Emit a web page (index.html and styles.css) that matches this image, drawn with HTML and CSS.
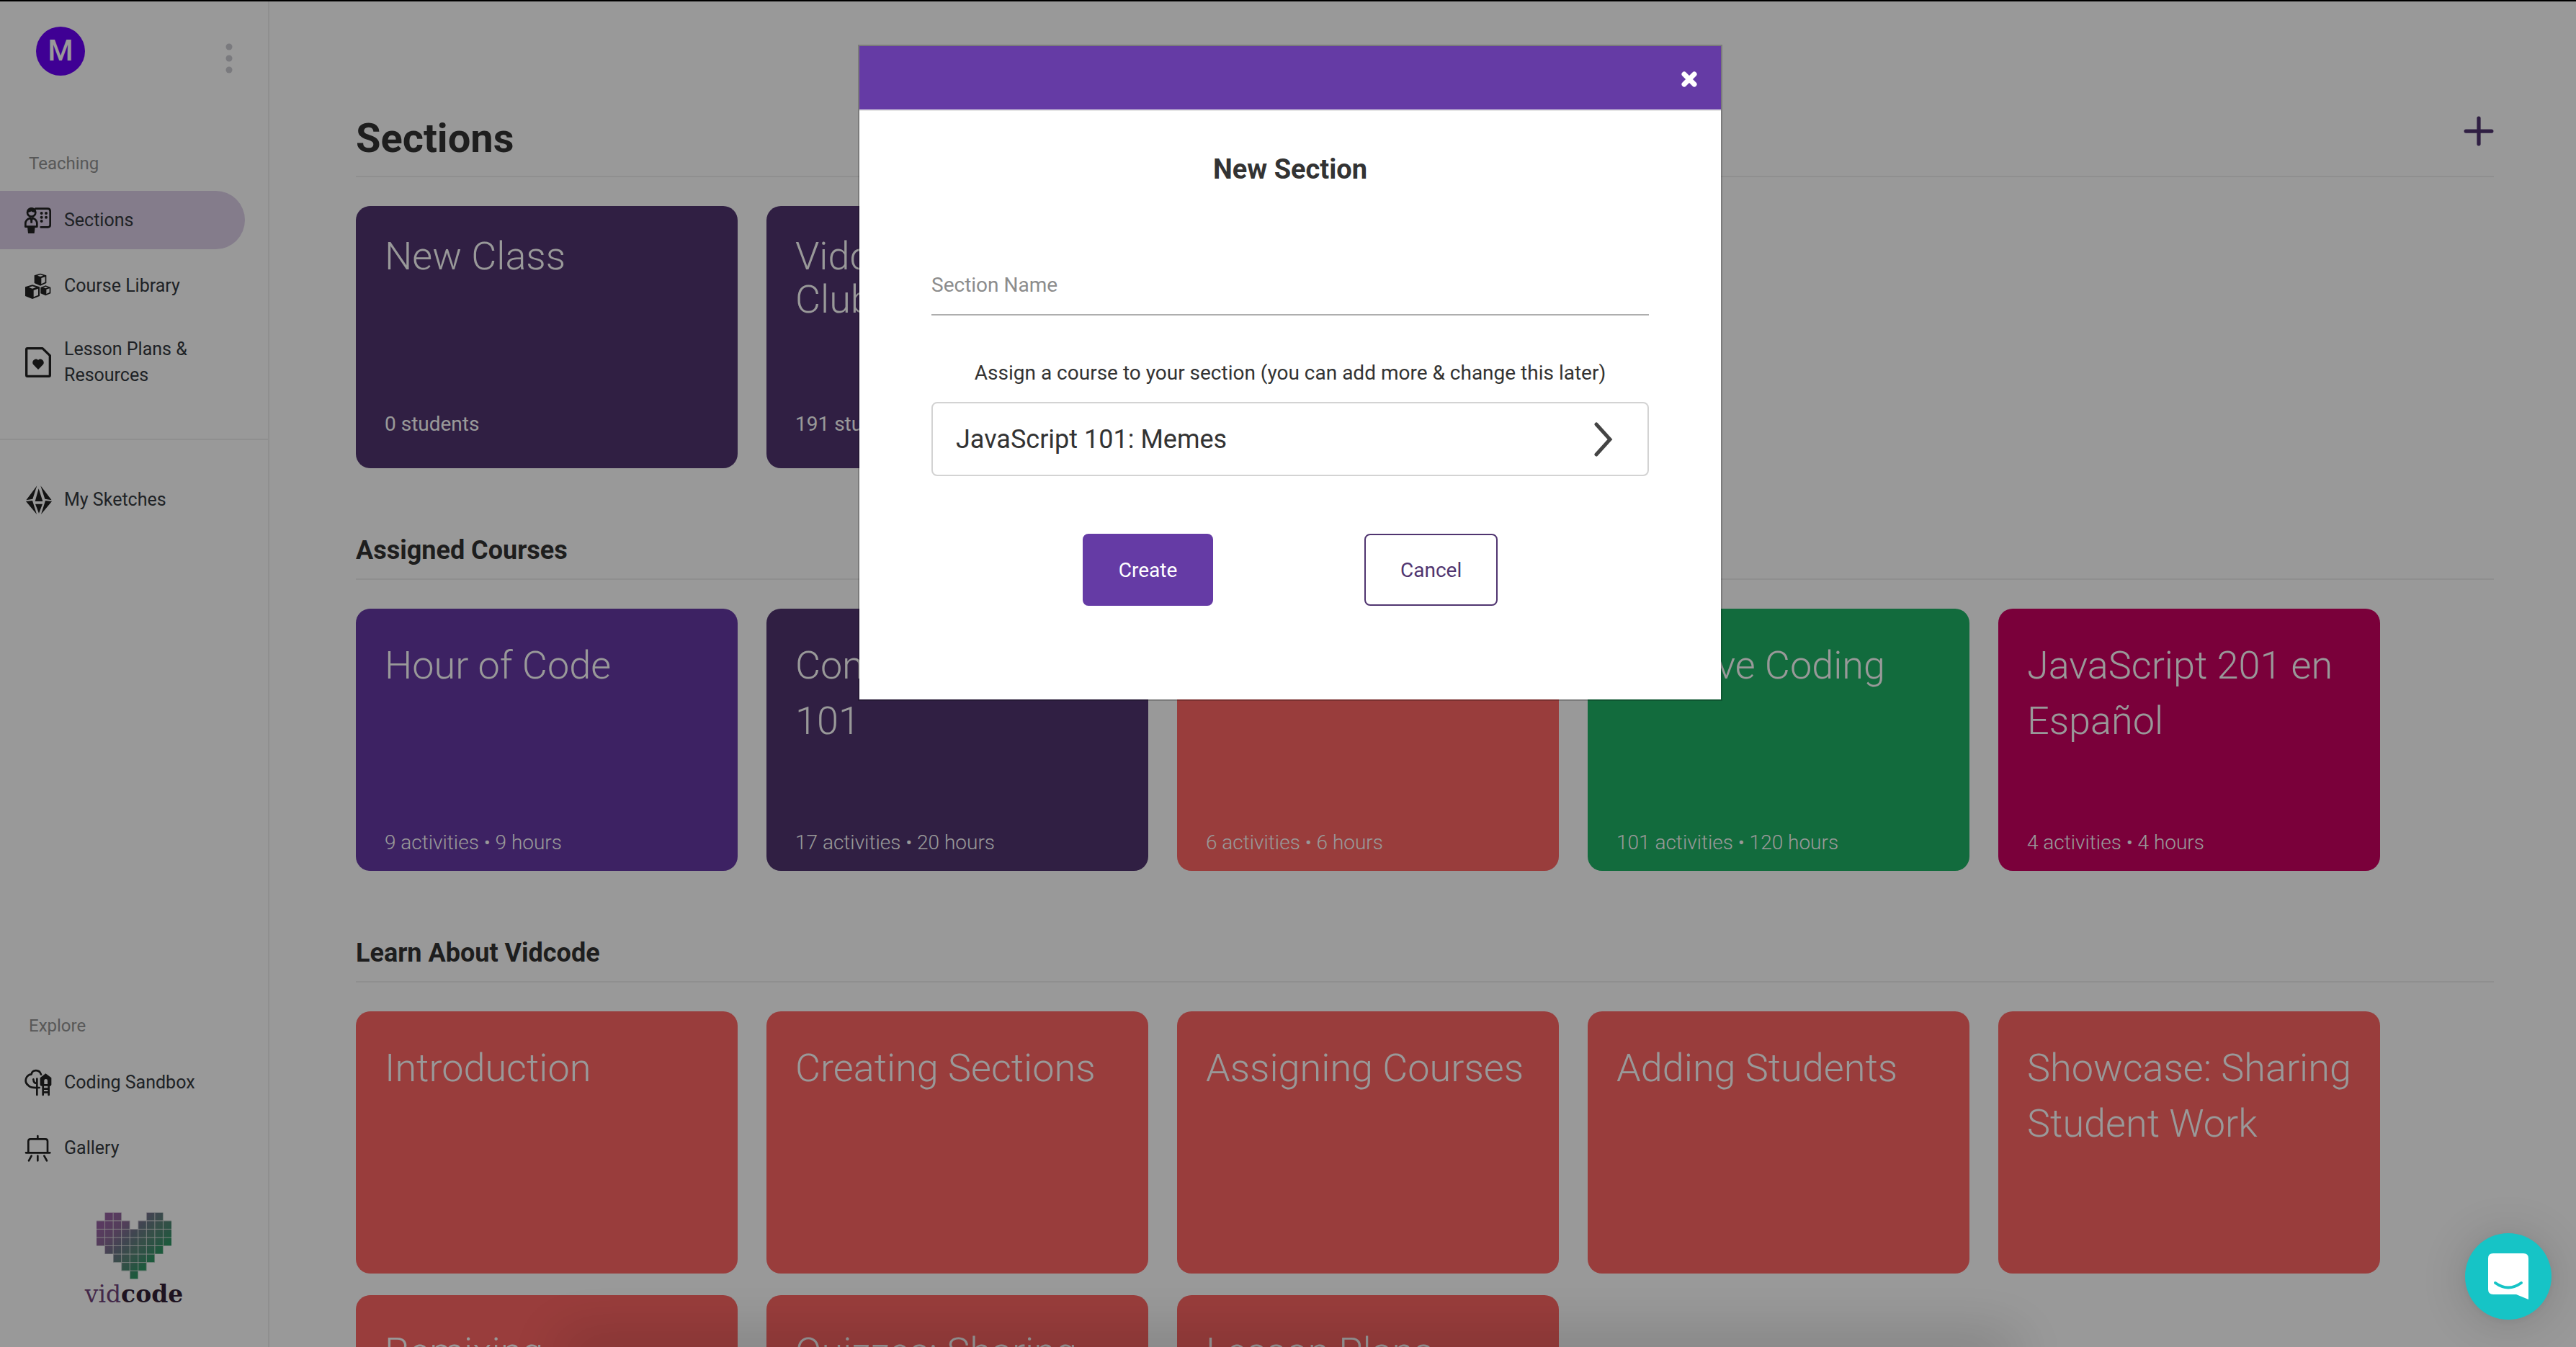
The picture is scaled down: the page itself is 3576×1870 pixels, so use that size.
FILE: index.html
```
<!DOCTYPE html>
<html lang="en">
<head>
<meta charset="utf-8">
<title>Vidcode</title>
<link rel="stylesheet" href="styles.css">
</head>
<body>
<div class="app">
  <aside class="sidebar">
    <div class="account">
      <span class="avatar">M</span>
      <button class="icon-button" type="button" aria-label="Account menu">
        <svg class="dots" viewBox="0 0 10 42"><circle cx="5" cy="5" r="4.5"/><circle cx="5" cy="21" r="4.5"/><circle cx="5" cy="37" r="4.5"/></svg>
      </button>
    </div>
    <nav class="nav">
      <p class="nav-label">Teaching</p>
      <a class="nav-item active" href="#">
        <svg class="nav-icon" viewBox="0 0 120 132">
          <path d="M49 17h50q11 0 11 11v57q0 9-9 9H71" class="line"/>
          <circle cx="32" cy="33" r="17" class="line"/>
          <path d="M13 33c0-27 38-27 38 0-10 0-16-1-20-5-4 4-9 5-18 5z"/>
          <path d="M7 92V79q0-16 19-23l6 6 6-6q17 7 17 23v13z" class="line"/>
          <path d="M27 56h10l-1 21h-8zM15 92h32l-3 28H18z"/>
          <circle cx="74" cy="36" r="6"/><circle cx="93" cy="36" r="6"/><circle cx="74" cy="53" r="6"/><circle cx="93" cy="53" r="6"/><circle cx="74" cy="69" r="6"/>
        </svg>
        <span>Sections</span>
      </a>
      <a class="nav-item" href="#">
        <svg class="nav-icon" viewBox="0 0 120 132">
          <path d="M69 14l25 8v32l-25 11-25-11V22z"/>
          <path d="M73 33l16-5v22l-16 8z" class="face"/><path d="M69 19l12 4-12 4-12-4z" class="face"/>
          <path d="M36 61l30 9v38l-30 12-30-12V70z"/>
          <path d="M41 84l19-7v27l-19 8z" class="face"/><path d="M36 67l15 5-15 5-15-5z" class="face"/>
          <path d="M91 64l21 8v25l-21 9-21-9V72z"/>
          <path d="M94 80l13-4v17l-13 6z" class="face"/><path d="M91 69l10 3-10 4-10-4z" class="face"/>
        </svg>
        <span>Course Library</span>
      </a>
      <a class="nav-item" href="#">
        <svg class="nav-icon" viewBox="0 0 120 132">
          <path d="M15 8h63l31 30v82q0 4-4 4H15q-4 0-4-4V12q0-4 4-4z" class="line thick"/>
          <path d="M60 96L40 76c-11-13 8-32 20-19 12-13 31 6 20 19z"/>
        </svg>
        <span>Lesson Plans &amp; Resources</span>
      </a>
      <hr class="nav-rule">
      <a class="nav-item" href="#">
        <svg class="nav-icon" viewBox="0 0 120 132">
          <path d="M55 7L37 62 10 67zM70 7l18 55 28 5zM62 19l17 53H47zM9 72l27-3 18 57zM117 72l-27-3-18 57zM48 83h30l-15 39z"/>
        </svg>
        <span>My Sketches</span>
      </a>
      <div class="nav-bottom">
        <p class="nav-label">Explore</p>
        <a class="nav-item" href="#">
          <svg class="nav-icon" viewBox="0 0 120 132">
            <path d="M72 32C65 9 35 11 32 31 8 34 8 57 8 59c0 12 9 16 15 22 8 8 24 6 42 6M55 117V50M40 52q1 17 15 17M55 66V50" class="line"/>
            <path d="M91 28l24 18v28q0 6-6 6H74q-6 0-6-6V46z"/>
            <path d="M85 72V58q0-7 7-7t7 7v14z" class="face"/>
            <path d="M80 78v39M104 78v39M80 92h24M80 106h24" class="line"/>
          </svg>
          <span>Coding Sandbox</span>
        </a>
        <a class="nav-item" href="#">
          <svg class="nav-icon" viewBox="0 0 120 132">
            <path d="M58 15v10M19 84V37q0-9 9-9h62q9 0 9 9v47M9 85h100M32 98l-11 20M58 98v20M85 98l11 20" class="line"/>
          </svg>
          <span>Gallery</span>
        </a>
      </div>
    </nav>
    <a class="brand" href="#">
      <svg class="heart" viewBox="0 0 9 8">
        <defs>
          <linearGradient id="heart-fill" gradientUnits="userSpaceOnUse" x1="0.5" y1="0.5" x2="6.5" y2="6.5">
            <stop offset="0.1" stop-color="#9562a0"/><stop offset="0.3" stop-color="#8a6896"/><stop offset="0.5" stop-color="#6b7586"/><stop offset="0.68" stop-color="#5a8478"/><stop offset="0.82" stop-color="#468a70"/><stop offset="0.95" stop-color="#2f9664"/>
          </linearGradient>
          <clipPath id="heart-shape"><path d="M1 0h2v1h1v1h1V1h1V0h2v1h1v3H8v1H7v1H6v1H5v1H4V7H3V6H2V5H1V4H0V1h1z"/></clipPath>
        </defs>
        <g clip-path="url(#heart-shape)">
          <path fill="url(#heart-fill)" d="M0 0h9v8H0z"/>
          <path class="grid-lines" d="M1 0v8M2 0v8M3 0v8M4 0v8M5 0v8M6 0v8M7 0v8M8 0v8M0 1h9M0 2h9M0 3h9M0 4h9M0 5h9M0 6h9M0 7h9"/>
        </g>
      </svg>
      <span class="wordmark">vid<b>code</b></span>
    </a>
  </aside>

  <main class="content">
    <section>
      <header class="page-head">
        <h1>Sections</h1>
        <button class="icon-button" type="button" aria-label="Add section">
          <svg class="plus" viewBox="0 0 40 40"><path d="M20 3v34M3 20h34"/></svg>
        </button>
      </header>
      <div class="cards sections">
        <a class="card plum" href="#"><h3>New Class</h3><p>0 students</p></a>
        <a class="card plum" href="#"><h3>Vidcode Club</h3><p>191 students</p></a>
      </div>
    </section>
    <section>
      <h2>Assigned Courses</h2>
      <div class="cards">
        <a class="card violet" href="#"><h3>Hour of Code</h3><p>9 activities • 9 hours</p></a>
        <a class="card plum" href="#"><h3>Computer Science 101</h3><p>17 activities • 20 hours</p></a>
        <a class="card coral" href="#"><h3>JavaScript 101</h3><p>6 activities • 6 hours</p></a>
        <a class="card green" href="#"><h3>Creative Coding</h3><p>101 activities • 120 hours</p></a>
        <a class="card berry" href="#"><h3>JavaScript 201 en Español</h3><p>4 activities • 4 hours</p></a>
      </div>
    </section>
    <section>
      <h2>Learn About Vidcode</h2>
      <div class="cards">
        <a class="card coral" href="#"><h3>Introduction</h3></a>
        <a class="card coral" href="#"><h3>Creating Sections</h3></a>
        <a class="card coral" href="#"><h3>Assigning Courses</h3></a>
        <a class="card coral" href="#"><h3>Adding Students</h3></a>
        <a class="card coral" href="#"><h3>Showcase: Sharing Student Work</h3></a>
        <a class="card coral" href="#"><h3>Remixing</h3></a>
        <a class="card coral" href="#"><h3>Quizzes: Sharing</h3></a>
        <a class="card coral" href="#"><h3>Lesson Plans</h3></a>
      </div>
    </section>
  </main>
</div>

<div class="overlay">
  <form class="modal" role="dialog" aria-labelledby="modal-title">
    <div class="modal-head">
      <button class="icon-button" type="button" aria-label="Close">
        <svg class="close" viewBox="0 0 22 22"><path d="M4 4l14 14M18 4L4 18"/></svg>
      </button>
    </div>
    <div class="modal-body">
      <h2 class="modal-title" id="modal-title">New Section</h2>
      <input class="name-field" type="text" placeholder="Section Name" aria-label="Section Name">
      <label class="course-label" for="course">Assign a course to your section (you can add more &amp; change this later)</label>
      <div class="course-picker">
        <select id="course"><option>JavaScript 101: Memes</option><option>Hour of Code</option></select>
        <svg class="chevron" viewBox="0 0 26 48"><path d="M3 3l19 21L3 45"/></svg>
      </div>
      <div class="actions">
        <button class="button primary" type="submit">Create</button>
        <button class="button" type="button">Cancel</button>
      </div>
    </div>
  </form>
</div>

<button class="chat" type="button" aria-label="Open chat">
  <svg viewBox="0 0 56 64"><path fill="#fff" d="M7 0h42q7 0 7 7v57l-17-7H7q-7 0-7-7V7q0-7 7-7z"/><path class="smile" d="M10 41q18 13 36 0"/></svg>
</button>
</body>
</html>
```
FILE: styles.css
```
* { box-sizing: border-box; }

body {
  margin: 0;
  background: #fff;
  color: #333;
  font-family: Roboto, "Liberation Sans", sans-serif;
  font-size: 28px;
}

h1, h2, h3, p { margin: 0; }
a { color: inherit; text-decoration: none; }
button, input, select { font: inherit; color: inherit; }
svg { display: block; }

.icon-button {
  display: block;
  padding: 0;
  border: 0;
  background: none;
}

.app {
  display: grid;
  grid-template-columns: 374px 1fr;
  height: 100vh;
  overflow: hidden;
}

/* Sidebar */
.sidebar {
  display: flex;
  flex-direction: column;
  height: 100vh;
  padding: 37px 0 52px;
  border-right: 2px solid #eee;
}

.account {
  display: flex;
  justify-content: space-between;
  align-items: center;
  padding: 0 49px 0 50px;
}

.avatar {
  width: 68px;
  height: 68px;
  border-radius: 50%;
  background: #6a00f7;
  color: #fff;
  font-size: 40px;
  font-weight: 500;
  line-height: 68px;
  text-align: center;
}

.dots { width: 10px; height: 42px; margin-top: 20px; fill: #cbcbd3; }

.nav {
  display: flex;
  flex: 1;
  flex-direction: column;
  gap: 10px;
  padding-top: 104px;
}

.nav-label {
  padding: 0 40px 10px;
  color: #939393;
  font-size: 24px;
  line-height: 36px;
}

.nav-item {
  display: flex;
  align-items: center;
  gap: 16px;
  min-height: 81px;
  margin-right: 32px;
  padding: 20px 48px 20px 33px;
  border-radius: 0 41px 41px 0;
  color: #343a40;
  font-size: 25px;
  line-height: 36px;
}

.nav-item.active { background: #dccfe8; }

.nav-icon { flex: none; width: 40px; height: 44px; margin: -4px 0; fill: #222; }
.nav-icon .line { fill: none; stroke: #222; stroke-width: 8; stroke-linecap: round; stroke-linejoin: round; }
.nav-icon .thick { stroke-width: 10; }
.nav-icon .face { fill: #fff; }

.nav-rule {
  width: 100%;
  height: 2px;
  margin: 40px 0 32px;
  border: 0;
  background: #eee;
}

.nav-bottom {
  display: flex;
  flex-direction: column;
  gap: 10px;
  margin-top: auto;
}

.brand {
  display: flex;
  flex-direction: column;
  align-items: center;
  margin-top: 49px;
}

.heart { width: 104px; height: 93px; }
.grid-lines { fill: none; stroke: #ddd; stroke-width: 0.08; }
.wordmark { color: #70437a; font: 33px/42px "DejaVu Serif", serif; }
.wordmark b { color: #321e36; }

/* Content */
.content { padding: 162px 114px 0 120px; }

.page-head {
  display: flex;
  justify-content: space-between;
  align-items: center;
  height: 84px;
  padding-bottom: 22px;
  border-bottom: 2px solid #eee;
}

h1 { font-size: 56px; line-height: 60px; }
.plus { width: 42px; height: 42px; margin-bottom: 20px; fill: none; stroke: #503570; stroke-width: 5; stroke-linecap: round; }

h2 { font-size: 36px; line-height: 42px; }
.content h2 { padding: 93px 0 18px; border-bottom: 2px solid #eee; }

.cards {
  display: grid;
  grid-template-columns: repeat(5, 530px);
  gap: 30px 40px;
  padding-top: 40px;
}

.card {
  display: flex;
  flex-direction: column;
  justify-content: space-between;
  min-height: 364px;
  padding: 40px 40px 18px;
  border-radius: 20px;
  color: #fff;
  font-weight: 300;
  line-height: 42px;
}

.card h3 { font-size: 54px; font-weight: 300; line-height: 77px; }
.sections .card { padding-bottom: 40px; font-weight: 400; }
.sections h3 { padding-right: 160px; line-height: 60px; }

.plum { background: #503570; }
.violet { background: #6639a5; }
.coral { background: #ff6664; }
.green { background: #1eb266; }
.berry { background: #cc0062; }

/* New section dialog */
.overlay {
  position: fixed;
  inset: 0;
  display: flex;
  justify-content: center;
  align-items: flex-start;
  padding: 60px 0 0 6px;
  overflow: hidden;
  border-top: 2px solid #000;
  background: rgba(0, 0, 0, 0.4);
}

/* soft shade along the bottom edge */
.overlay::after {
  content: "";
  position: absolute;
  right: 22%;
  bottom: -20px;
  left: 22%;
  height: 20px;
  box-shadow: 0 0 80px 10px rgba(0, 0, 0, 0.25);
}

.modal {
  width: 1200px;
  border: 2px solid rgba(0, 0, 0, 0.2);
  background: #fff;
  background-clip: padding-box;
}

.modal-head {
  display: flex;
  justify-content: flex-end;
  align-items: center;
  height: 90px;
  padding: 4px 33px 0;
  border-bottom: 2px solid #e5e5e5;
  background: #653ba5;
}

.close { width: 22px; height: 22px; fill: none; stroke: #fff; stroke-width: 7; stroke-linecap: round; }

.modal-body {
  display: flex;
  flex-direction: column;
  padding: 60px 100px 130px;
}

.modal-title { font-size: 38px; text-align: center; }

.name-field {
  width: 100%;
  height: 84px;
  margin-top: 98px;
  padding: 0;
  border: 0;
  border-bottom: 2px solid #aeaeae;
  background: none;
}

.name-field::placeholder { color: #8c8c8c; opacity: 1; }

.course-label {
  margin: 59px 0 19px;
  line-height: 42px;
  text-align: center;
}

.course-picker { position: relative; }

.course-picker select {
  display: block;
  width: 100%;
  height: 103px;
  padding: 0 32px;
  border: 2px solid #d3d3d3;
  border-radius: 8px;
  appearance: none;
  background: #fff;
  font-size: 36px;
}

.chevron {
  position: absolute;
  top: 28px;
  right: 50px;
  width: 26px;
  height: 48px;
  fill: none;
  stroke: #444;
  stroke-width: 5;
  stroke-linecap: round;
  pointer-events: none;
}

.actions {
  display: flex;
  justify-content: space-evenly;
  margin-top: 80px;
}

.button {
  height: 100px;
  padding: 0 48px;
  border: 2px solid #503570;
  border-radius: 8px;
  background: #fff;
  color: #503570;
}

.button.primary { border-color: #653ba5; background: #653ba5; color: #fff; }

/* Chat launcher */
.chat {
  position: fixed;
  right: 34px;
  bottom: 38px;
  width: 120px;
  height: 120px;
  padding: 0 32px;
  border: 0;
  border-radius: 50%;
  background: #16c4c6;
  box-shadow: 0 2px 12px rgba(0, 0, 0, 0.06), 0 4px 64px rgba(0, 0, 0, 0.16);
}

.smile { fill: none; stroke: #16c4c6; stroke-width: 4; stroke-linecap: round; }
```
